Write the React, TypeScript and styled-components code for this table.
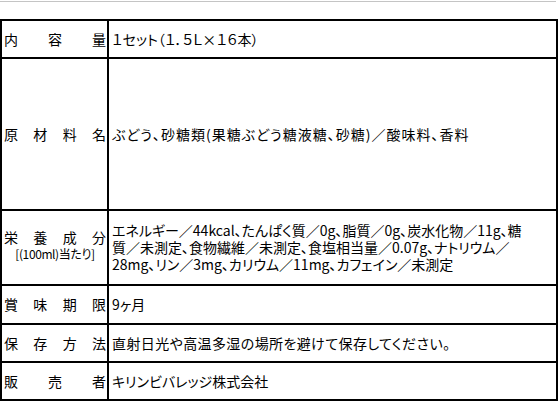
import React from "react";
import styled, { createGlobalStyle } from "styled-components";

const GlobalStyle = createGlobalStyle`
  html, body { margin: 0; padding: 0; background: #ffffff; }
  body {
    font-family: "Noto Sans CJK JP", "Noto Sans", sans-serif;
    color: #000000;
  }
`;

const Page = styled.div`
  padding-top: 1px;
  width: 560px;
`;

const TopRule = styled.div`
  width: 556px;
  height: 0;
  border-top: 1px solid #c4c4c4;
`;

const Table = styled.table`
  margin-top: 17px;
  border-collapse: collapse;
  table-layout: fixed;
  width: 558px;
  font-size: 14px;
  line-height: 17px;
  font-feature-settings: "palt";
`;

const Row = styled.tr<{ $h: number }>`
  height: ${(p) => p.$h}px;
`;

const LabelCell = styled.td`
  border: 2px solid #000;
  padding: 0 1px 0 2px;
  vertical-align: middle;
`;

const ValueCell = styled.td<{ $track?: number }>`
  border: 2px solid #000;
  padding: 0 3px;
  vertical-align: middle;
  white-space: nowrap;
  letter-spacing: ${(p) => p.$track ?? 0}px;
`;

const Label = styled.div`
  display: flex;
  justify-content: space-between;
`;

const LabelStack = styled.div`
  display: flex;
  flex-direction: column;
  padding-bottom: 5px;
`;

const SubNote = styled.div`
  text-align: center;
  font-size: 12px;
  line-height: 14px;
  letter-spacing: -0.4px;
  margin-top: 1px;
`;

const Spread = ({ text }: { text: string }) => (
  <Label>
    {Array.from(text).map((c, i) => (
      <span key={i}>{c}</span>
    ))}
  </Label>
);

export default function App() {
  return (
    <Page>
      <GlobalStyle />
      <TopRule />
      <Table>
        <colgroup>
          <col style={{ width: 107 }} />
          <col style={{ width: 449 }} />
        </colgroup>
        <tbody>
          <Row $h={38}>
            <LabelCell>
              <Spread text="内容量" />
            </LabelCell>
            <ValueCell>１セット（１．５Ｌ×１６本）</ValueCell>
          </Row>
          <Row $h={152}>
            <LabelCell>
              <Spread text="原材料名" />
            </LabelCell>
            <ValueCell $track={1}>ぶどう、砂糖類(果糖ぶどう糖液糖、砂糖)／酸味料、香料</ValueCell>
          </Row>
          <Row $h={75}>
            <LabelCell>
              <LabelStack>
                <Spread text="栄養成分" />
                <SubNote>[(100ml)当たり]</SubNote>
              </LabelStack>
            </LabelCell>
            <ValueCell>
              エネルギー／44kcal、たんぱく質／0g、脂質／0g、炭水化物／11g、糖
              <br />
              質／未測定、食物繊維／未測定、食塩相当量／0.07g、ナトリウム／
              <br />
              28mg、リン／3mg、カリウム／11mg、カフェイン／未測定
            </ValueCell>
          </Row>
          <Row $h={39}>
            <LabelCell>
              <Spread text="賞味期限" />
            </LabelCell>
            <ValueCell>9ヶ月</ValueCell>
          </Row>
          <Row $h={38}>
            <LabelCell>
              <Spread text="保存方法" />
            </LabelCell>
            <ValueCell $track={0.4}>直射日光や高温多湿の場所を避けて保存してください。</ValueCell>
          </Row>
          <Row $h={38}>
            <LabelCell>
              <Spread text="販売者" />
            </LabelCell>
            <ValueCell>キリンビバレッジ株式会社</ValueCell>
          </Row>
        </tbody>
      </Table>
    </Page>
  );
}
